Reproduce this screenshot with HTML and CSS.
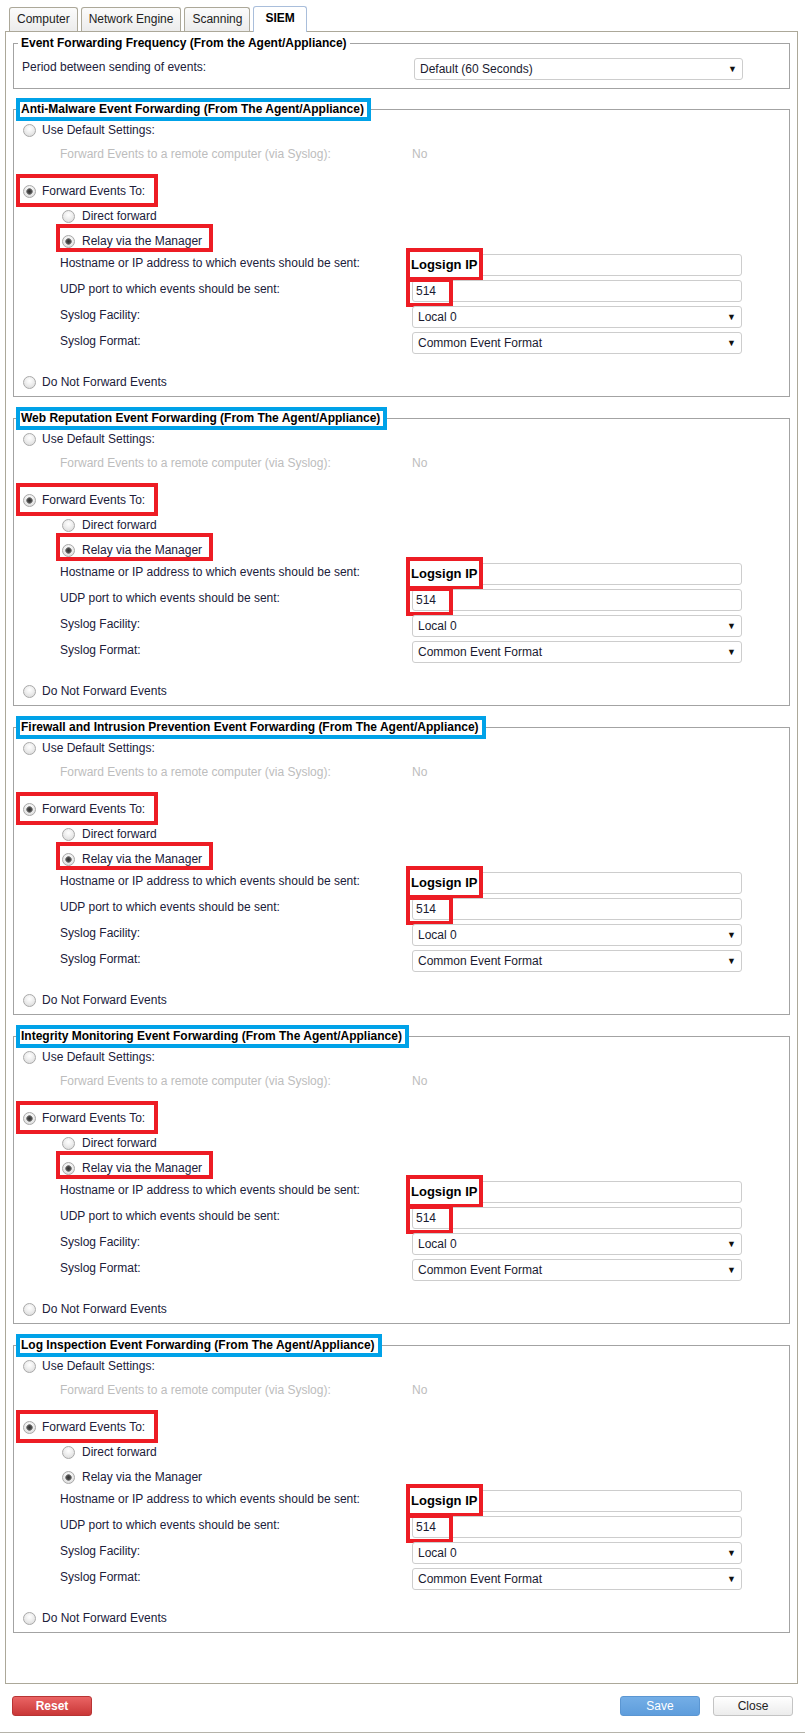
FILE: index.html
```html
<!DOCTYPE html>
<html lang="en">
<head>
  <meta charset="UTF-8" />
  <title>Computer Settings - SIEM</title>
  <link rel="stylesheet" href="styles.css">
</head>
<body>
  <div class="tabs">
    <a class="tab">Computer</a>
    <a class="tab">Network Engine</a>
    <a class="tab">Scanning</a>
    <a class="tab active">SIEM</a>
  </div>

  <div class="panel">
    <fieldset class="group freq">
      <legend>Event Forwarding Frequency (From the Agent/Appliance)</legend>
      <div class="field">
        <label>Period between sending of events:</label>
        <div class="select">Default (60 Seconds)<span class="caret">&#9660;</span></div>
      </div>
    </fieldset>

    <!-- Anti-Malware -->
    <fieldset class="group">
      <legend class="hl">Anti-Malware Event Forwarding (From The Agent/Appliance)</legend>
      <div class="opt"><input type="radio" name="am"> Use Default Settings:</div>
      <div class="note"><span>Forward Events to a remote computer (via Syslog):</span><span>No</span></div>
      <div class="opt fwd"><input type="radio" name="am" checked> Forward Events To:<i class="mark mark-fwd"></i></div>
      <div class="opt sub"><input type="radio" name="am-mode"> Direct forward</div>
      <div class="opt sub"><input type="radio" name="am-mode" checked> Relay via the Manager<i class="mark mark-relay"></i></div>
      <div class="field">
        <label>Hostname or IP address to which events should be sent:</label>
        <div class="input"></div>
        <b class="mark mark-host">Logsign IP</b>
      </div>
      <div class="field">
        <label>UDP port to which events should be sent:</label>
        <div class="input">514</div>
        <i class="mark mark-port"></i>
      </div>
      <div class="field">
        <label>Syslog Facility:</label>
        <div class="select">Local 0<span class="caret">&#9660;</span></div>
      </div>
      <div class="field">
        <label>Syslog Format:</label>
        <div class="select">Common Event Format<span class="caret">&#9660;</span></div>
      </div>
      <div class="opt off"><input type="radio" name="am"> Do Not Forward Events</div>
    </fieldset>

    <!-- Web Reputation -->
    <fieldset class="group">
      <legend class="hl">Web Reputation Event Forwarding (From The Agent/Appliance)</legend>
      <div class="opt"><input type="radio" name="wr"> Use Default Settings:</div>
      <div class="note"><span>Forward Events to a remote computer (via Syslog):</span><span>No</span></div>
      <div class="opt fwd"><input type="radio" name="wr" checked> Forward Events To:<i class="mark mark-fwd"></i></div>
      <div class="opt sub"><input type="radio" name="wr-mode"> Direct forward</div>
      <div class="opt sub"><input type="radio" name="wr-mode" checked> Relay via the Manager<i class="mark mark-relay"></i></div>
      <div class="field">
        <label>Hostname or IP address to which events should be sent:</label>
        <div class="input"></div>
        <b class="mark mark-host">Logsign IP</b>
      </div>
      <div class="field">
        <label>UDP port to which events should be sent:</label>
        <div class="input">514</div>
        <i class="mark mark-port"></i>
      </div>
      <div class="field">
        <label>Syslog Facility:</label>
        <div class="select">Local 0<span class="caret">&#9660;</span></div>
      </div>
      <div class="field">
        <label>Syslog Format:</label>
        <div class="select">Common Event Format<span class="caret">&#9660;</span></div>
      </div>
      <div class="opt off"><input type="radio" name="wr"> Do Not Forward Events</div>
    </fieldset>

    <!-- Firewall / IPS -->
    <fieldset class="group">
      <legend class="hl">Firewall and Intrusion Prevention Event Forwarding (From The Agent/Appliance)</legend>
      <div class="opt"><input type="radio" name="fw"> Use Default Settings:</div>
      <div class="note"><span>Forward Events to a remote computer (via Syslog):</span><span>No</span></div>
      <div class="opt fwd"><input type="radio" name="fw" checked> Forward Events To:<i class="mark mark-fwd"></i></div>
      <div class="opt sub"><input type="radio" name="fw-mode"> Direct forward</div>
      <div class="opt sub"><input type="radio" name="fw-mode" checked> Relay via the Manager<i class="mark mark-relay"></i></div>
      <div class="field">
        <label>Hostname or IP address to which events should be sent:</label>
        <div class="input"></div>
        <b class="mark mark-host">Logsign IP</b>
      </div>
      <div class="field">
        <label>UDP port to which events should be sent:</label>
        <div class="input">514</div>
        <i class="mark mark-port"></i>
      </div>
      <div class="field">
        <label>Syslog Facility:</label>
        <div class="select">Local 0<span class="caret">&#9660;</span></div>
      </div>
      <div class="field">
        <label>Syslog Format:</label>
        <div class="select">Common Event Format<span class="caret">&#9660;</span></div>
      </div>
      <div class="opt off"><input type="radio" name="fw"> Do Not Forward Events</div>
    </fieldset>

    <!-- Integrity Monitoring -->
    <fieldset class="group">
      <legend class="hl">Integrity Monitoring Event Forwarding (From The Agent/Appliance)</legend>
      <div class="opt"><input type="radio" name="im"> Use Default Settings:</div>
      <div class="note"><span>Forward Events to a remote computer (via Syslog):</span><span>No</span></div>
      <div class="opt fwd"><input type="radio" name="im" checked> Forward Events To:<i class="mark mark-fwd"></i></div>
      <div class="opt sub"><input type="radio" name="im-mode"> Direct forward</div>
      <div class="opt sub"><input type="radio" name="im-mode" checked> Relay via the Manager<i class="mark mark-relay"></i></div>
      <div class="field">
        <label>Hostname or IP address to which events should be sent:</label>
        <div class="input"></div>
        <b class="mark mark-host">Logsign IP</b>
      </div>
      <div class="field">
        <label>UDP port to which events should be sent:</label>
        <div class="input">514</div>
        <i class="mark mark-port"></i>
      </div>
      <div class="field">
        <label>Syslog Facility:</label>
        <div class="select">Local 0<span class="caret">&#9660;</span></div>
      </div>
      <div class="field">
        <label>Syslog Format:</label>
        <div class="select">Common Event Format<span class="caret">&#9660;</span></div>
      </div>
      <div class="opt off"><input type="radio" name="im"> Do Not Forward Events</div>
    </fieldset>

    <!-- Log Inspection -->
    <fieldset class="group">
      <legend class="hl">Log Inspection Event Forwarding (From The Agent/Appliance)</legend>
      <div class="opt"><input type="radio" name="li"> Use Default Settings:</div>
      <div class="note"><span>Forward Events to a remote computer (via Syslog):</span><span>No</span></div>
      <div class="opt fwd"><input type="radio" name="li" checked> Forward Events To:<i class="mark mark-fwd"></i></div>
      <div class="opt sub"><input type="radio" name="li-mode"> Direct forward</div>
      <div class="opt sub"><input type="radio" name="li-mode" checked> Relay via the Manager</div>
      <div class="field">
        <label>Hostname or IP address to which events should be sent:</label>
        <div class="input"></div>
        <b class="mark mark-host">Logsign IP</b>
      </div>
      <div class="field">
        <label>UDP port to which events should be sent:</label>
        <div class="input">514</div>
        <i class="mark mark-port"></i>
      </div>
      <div class="field">
        <label>Syslog Facility:</label>
        <div class="select">Local 0<span class="caret">&#9660;</span></div>
      </div>
      <div class="field">
        <label>Syslog Format:</label>
        <div class="select">Common Event Format<span class="caret">&#9660;</span></div>
      </div>
      <div class="opt off"><input type="radio" name="li"> Do Not Forward Events</div>
    </fieldset>
  </div>

  <div class="actions">
    <button class="btn btn-reset">Reset</button>
    <span class="spacer"></span>
    <button class="btn btn-save">Save</button>
    <button class="btn btn-close">Close</button>
  </div>
  <div class="bottom-rule"></div>
</body>
</html>
```

FILE: styles.css
```css
* { box-sizing: border-box; }

body {
  margin: 0;
  width: 805px;
  background: #fff;
  font-family: "Liberation Sans", Arial, sans-serif;
  font-size: 12px;
  color: #20203a;
}

/* tabs */
.tabs {
  display: flex;
  align-items: flex-end;
  gap: 3px;
  height: 31px;
  padding: 7px 0 0 9px;
}

.tab {
  height: 24px;
  line-height: 23px;
  padding: 0 7px;
  border: 1px solid #aca899;
  border-bottom: 0;
  border-radius: 3px 3px 0 0;
  background: linear-gradient(#fbfbfb, #ececec);
  color: #222;
}

.tab.active {
  position: relative;
  z-index: 1;
  height: 26px;
  margin-bottom: -1px;
  padding: 0 11px;
  background: #fff;
  border-color: #a9bedb;
  font-weight: bold;
  color: #000;
}

/* main panel */
.panel {
  width: 793px;
  margin-left: 5px;
  padding: 4px 7px 50px 7px;
  border: 1px solid #aca899;
}

.group {
  margin: 10px 0 0 0;
  padding: 0 0 5px 0;
  min-width: 0;
  border: 1px solid #a3a3a3;
}

.group.freq { padding-bottom: 8px; margin-top: 0; }
.group.freq + .group { margin-top: 9px; }

.group legend {
  margin-left: 4px;
  padding: 0 3px;
  line-height: 15px;
  font-weight: bold;
  color: #000;
}

.group legend.hl {
  margin-left: 2px;
  padding: 0 3px 0 1px;
  border: 4px solid #00a2e8;
  background: #fff;
}

/* radio rows */
.opt {
  position: relative;
  display: flex;
  align-items: center;
  gap: 6px;
  height: 18px;
  padding-left: 9px;
}

.opt.fwd { margin-top: 19px; }
.opt.sub { margin-top: 7px; padding-left: 48px; gap: 7px; }
.opt.off { margin-top: 19px; }

.opt input {
  appearance: none;
  -webkit-appearance: none;
  width: 13px;
  height: 13px;
  margin: 0;
  border: 1px solid #a9a9a9;
  border-radius: 50%;
  background: radial-gradient(circle at 50% 35%, #ffffff 0, #f0f0f0 40%, #d6d6d6 100%);
}

.opt input:checked {
  background:
    radial-gradient(circle, #333 0, #4a4a4a 2px, #8a8a8a 3px, transparent 3.6px),
    radial-gradient(circle at 50% 35%, #ffffff 0, #f0f0f0 40%, #d6d6d6 100%);
}

.note {
  display: grid;
  grid-template-columns: 352px auto;
  height: 18px;
  line-height: 18px;
  margin-top: 6px;
  padding-left: 46px;
  color: #bdbdbd;
}

/* label + control rows */
.field {
  position: relative;
  display: grid;
  grid-template-columns: 352px 330px;
  margin-top: 4px;
  padding-left: 46px;
}

.field label { line-height: 18px; }

.freq .field {
  grid-template-columns: 392px 329px;
  margin-top: 7px;
  padding-left: 8px;
}

.input, .select {
  height: 22px;
  line-height: 20px;
  border: 1px solid #cdcdcd;
  border-radius: 3px;
  background: #fff;
  color: #1a1a30;
}

.input { padding: 0 3px; }

.select {
  display: flex;
  justify-content: space-between;
  padding: 0 5px 0 5px;
}

.caret {
  font-size: 9px;
  color: #111;
}

/* red annotation boxes drawn over the form */
.mark {
  position: absolute;
  border: 4px solid #ed1c24;
  pointer-events: none;
}

.mark-fwd { left: 2px; top: -8px; width: 142px; height: 33px; }
.mark-relay { left: 42px; top: -8px; width: 157px; height: 28px; }

.mark-host {
  left: 392px;
  top: -6px;
  width: 77px;
  height: 33px;
  padding-left: 1px;
  background: #fff;
  font-size: 13px;
  line-height: 25px;
  color: #000;
}

.mark-port { left: 392px; top: -2px; width: 47px; height: 29px; }

/* footer buttons */
.actions {
  display: flex;
  gap: 13px;
  margin-top: 12px;
  padding: 0 12px;
}

.spacer { flex: 1; }

.btn {
  width: 80px;
  height: 20px;
  padding: 0;
  border-radius: 3px;
  font-family: inherit;
  font-size: 12px;
}

.btn-reset {
  border: 1px solid #b83434;
  background: linear-gradient(#ea6464, #c93737);
  color: #fff;
  font-weight: bold;
}

.btn-save {
  border: 1px solid #5b96d2;
  background: linear-gradient(#74aee6, #5e9ddc);
  color: #fff;
}

.btn-close {
  border: 1px solid #c4c4c4;
  background: linear-gradient(#ffffff, #ececec);
  color: #222;
}

.bottom-rule {
  margin-top: 16px;
  height: 1px;
  background: #b5b3aa;
}
```
